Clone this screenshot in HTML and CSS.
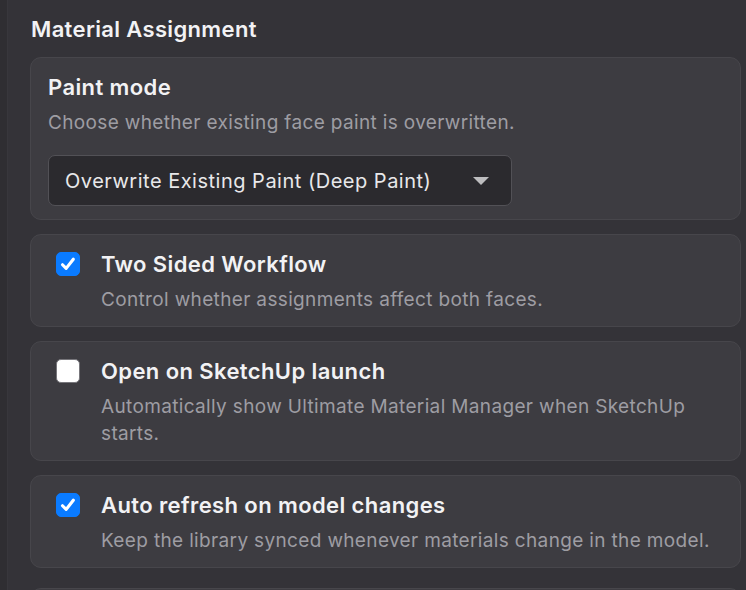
FILE: index.html
```html
<!DOCTYPE html>
<html lang="en">
<head>
<meta charset="utf-8">
<title>Material Assignment</title>
<link rel="stylesheet" href="styles.css">
</head>
<body>
<div class="panel">
  <h2 class="section-title">Material Assignment</h2>
  <div class="cards">
    <div class="card">
      <div class="card-title">Paint mode</div>
      <div class="card-desc">Choose whether existing face paint is overwritten.</div>
      <div class="select">
        <span class="select-text">Overwrite Existing Paint (Deep Paint)</span>
        <svg class="select-arrow" width="16" height="8" viewBox="0 0 16 8"><path d="M0 0 H16 L8 8 Z" fill="#bdbdbf"/></svg>
      </div>
    </div>
    <div class="card check-card">
      <span class="checkbox checked">
        <svg width="24" height="24" viewBox="0 0 24 24"><path d="M6 12.8 L10 16.8 L17.8 6.8" fill="none" stroke="#fff" stroke-width="3.4" stroke-linecap="round" stroke-linejoin="round"/></svg>
      </span>
      <div class="check-body">
        <div class="card-title">Two Sided Workflow</div>
        <div class="card-desc">Control whether assignments affect both faces.</div>
      </div>
    </div>
    <div class="card check-card">
      <span class="checkbox"></span>
      <div class="check-body">
        <div class="card-title">Open on SketchUp launch</div>
        <div class="card-desc">Automatically show Ultimate Material Manager when SketchUp starts.</div>
      </div>
    </div>
    <div class="card check-card">
      <span class="checkbox checked">
        <svg width="24" height="24" viewBox="0 0 24 24"><path d="M6 12.8 L10 16.8 L17.8 6.8" fill="none" stroke="#fff" stroke-width="3.4" stroke-linecap="round" stroke-linejoin="round"/></svg>
      </span>
      <div class="check-body">
        <div class="card-title">Auto refresh on model changes</div>
        <div class="card-desc">Keep the library synced whenever materials change in the model.</div>
      </div>
    </div>
    <div class="card next-card"></div>
  </div>
</div>
</body>
</html>
```
FILE: styles.css
```css
html, body {
  margin: 0;
  padding: 0;
  height: 100%;
  overflow: hidden;
}
body {
  background: #2f2e32;
  font-family: Inter, "Noto Sans", "Liberation Sans", sans-serif;
  color: #f2f2f4;
}
.panel {
  margin-left: 7px;
  min-height: 100vh;
  background: #343338;
  border-left: 1px solid #38373c;
  padding: 15px 5px 0 22px;
  box-sizing: border-box;
}
.section-title {
  margin: 0 0 13px 0;
  font-size: 22px;
  line-height: 29px;
  font-weight: 600;
  letter-spacing: 0.35px;
  color: #f2f2f4;
  padding-left: 1px;
}
.cards {
  display: flex;
  flex-direction: column;
  gap: 14px;
}
.card {
  background: #3d3c41;
  border: 1px solid #47464b;
  border-radius: 11px;
  padding: 14px 17px 13px 17px;
}
.card-title {
  font-size: 22px;
  line-height: 30px;
  font-weight: 600;
  letter-spacing: 0.4px;
  color: #f2f2f4;
}
.card-desc {
  margin-top: 7px;
  font-size: 19px;
  line-height: 27px;
  letter-spacing: 0.35px;
  color: #9e9da3;
}
.select {
  margin-top: 19px;
  width: 464px;
  height: 51px;
  box-sizing: border-box;
  background: #2b2a2e;
  border: 1px solid #525156;
  border-radius: 7px;
  display: flex;
  align-items: center;
  justify-content: space-between;
  padding: 0 22px 0 16px;
}
.select-text {
  font-size: 20px;
  letter-spacing: 0.5px;
  color: #e8e8ea;
}
.select-arrow {
  display: block;
}
.check-card {
  display: flex;
  align-items: flex-start;
  gap: 21px;
  padding-left: 25px;
}
.checkbox {
  flex: none;
  width: 24px;
  height: 24px;
  box-sizing: border-box;
  border-radius: 5px;
  background: #ffffff;
  border: 1px solid #77767b;
  margin-top: 3px;
  display: flex;
  align-items: center;
  justify-content: center;
}
.checkbox.checked {
  background: #0a7bff;
  border-color: #0a7bff;
}
.checkbox svg {
  display: block;
}
.check-body {
  flex: 1;
  min-width: 0;
}
.next-card {
  margin-top: 6px;
  height: 60px;
}
```
